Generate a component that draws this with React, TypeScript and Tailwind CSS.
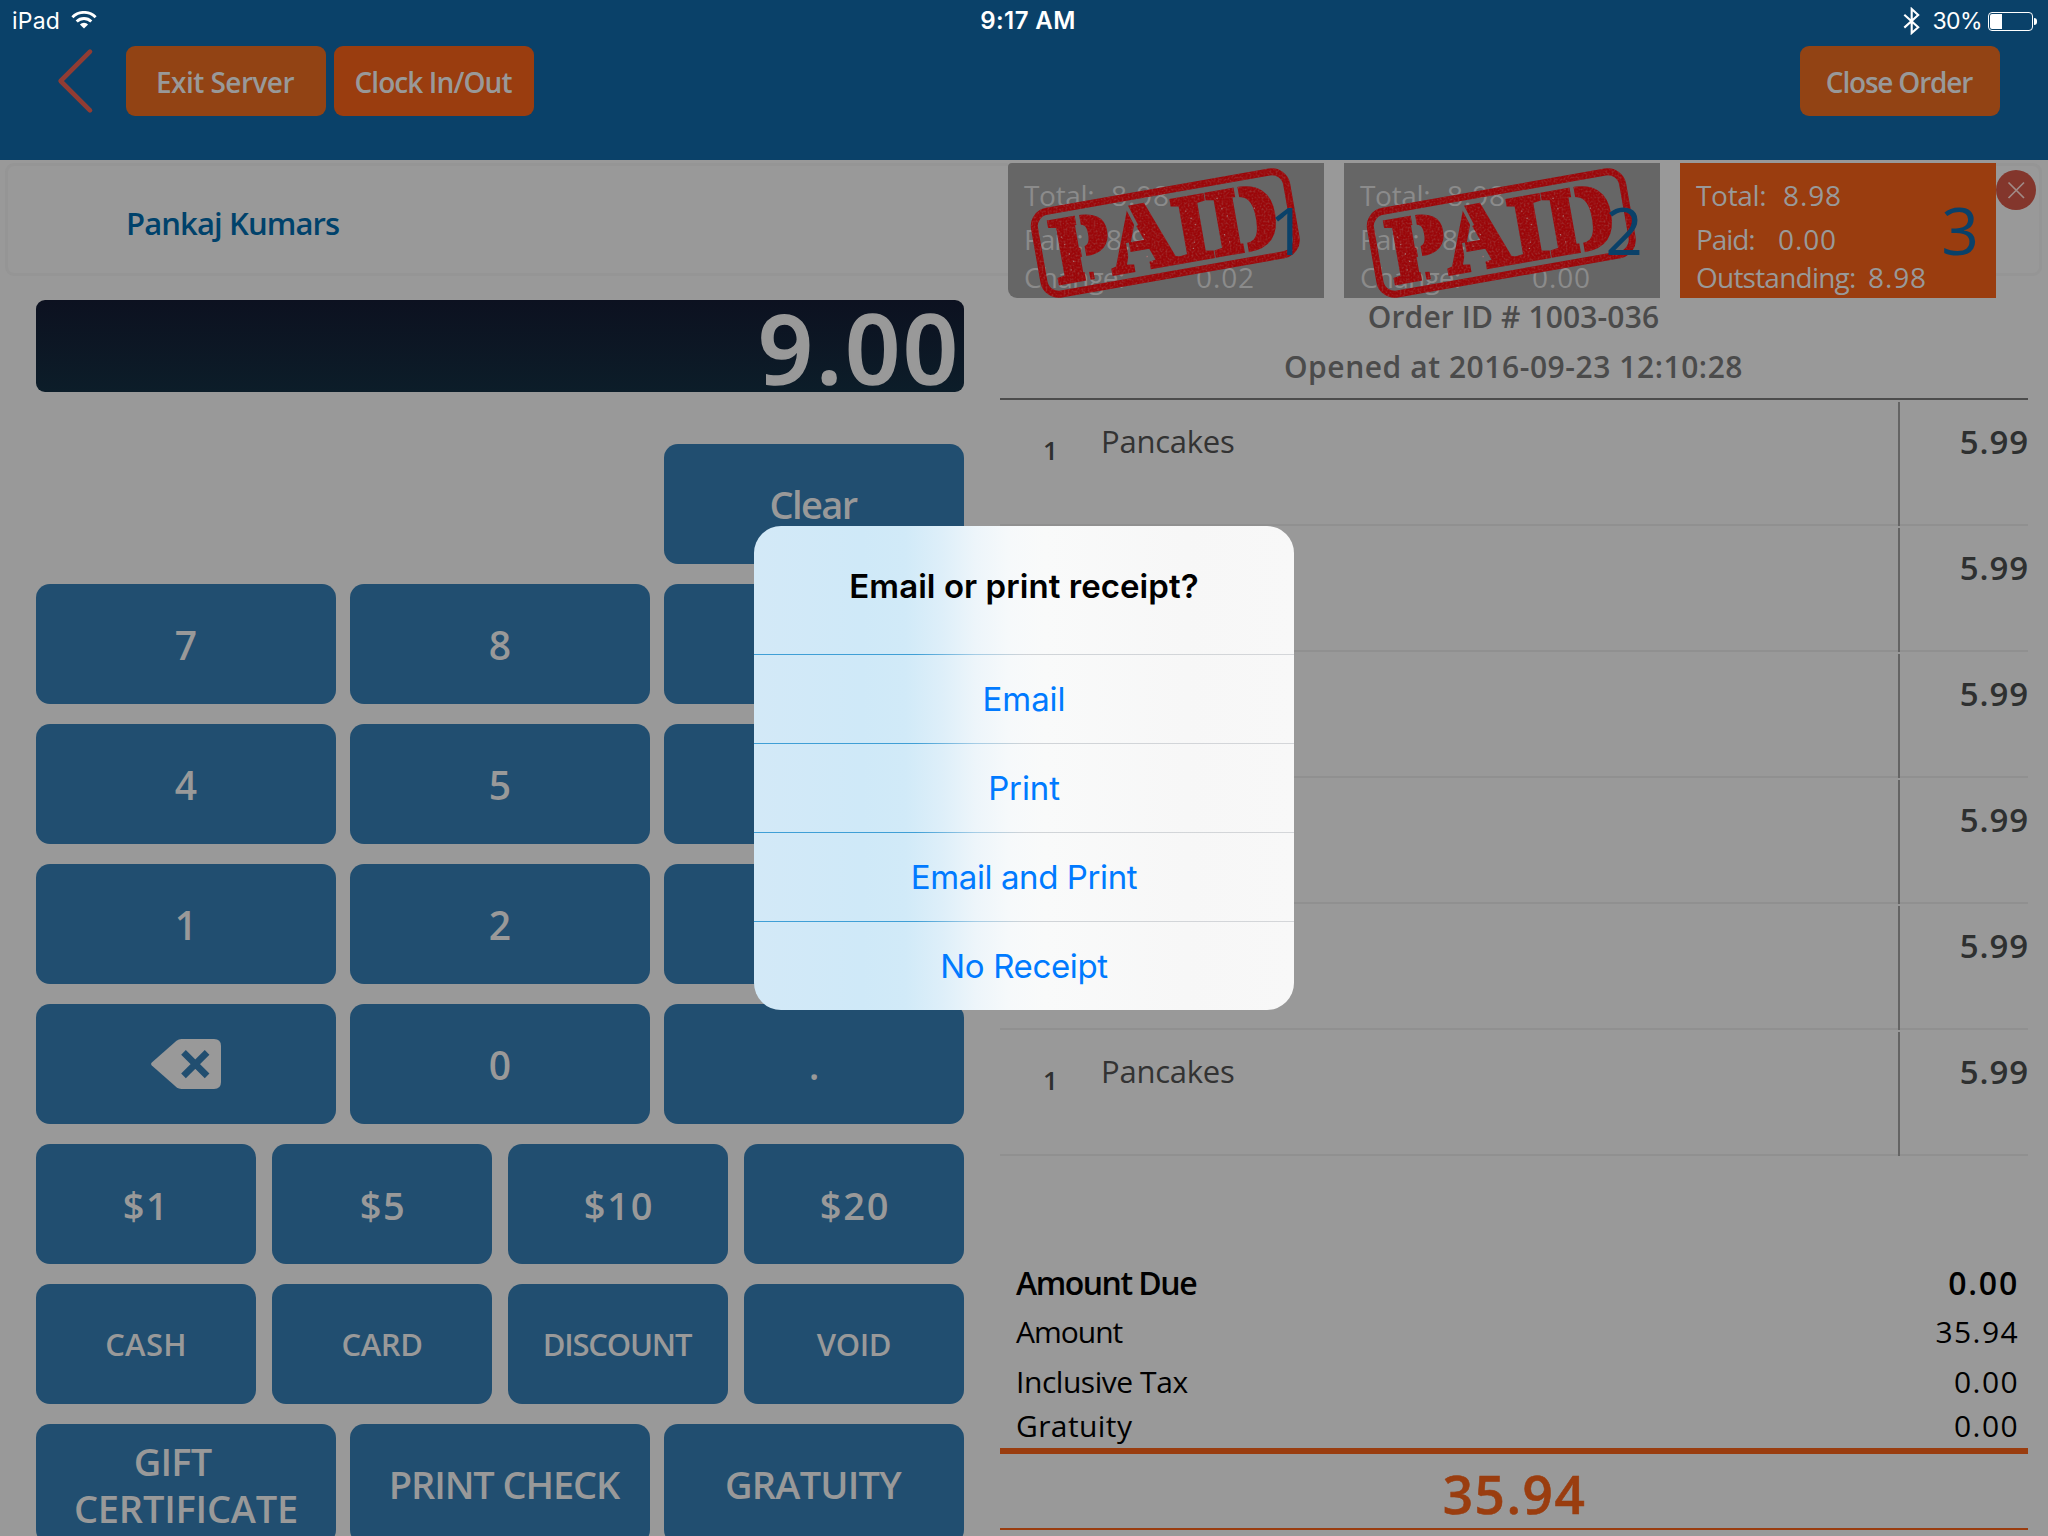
import React from "react";

type KeyProps = { children: React.ReactNode; className?: string };

function Key({ children, className = "" }: KeyProps) {
  return (
    <button
      className={`flex h-[120px] items-center justify-center rounded-[14px] bg-[#214e70] font-semibold text-[#999999] ${className}`}
    >
      {children}
    </button>
  );
}

function WifiIcon() {
  return (
    <svg width="26" height="20" viewBox="0 0 26 20" fill="none" stroke="#fff" strokeWidth="2.9">
      <path d="M1.4 6.2A16.4 16.4 0 0 1 24.6 6.2" />
      <path d="M5.7 10.5A10.3 10.3 0 0 1 20.3 10.5" />
      <path d="M13 17.6L8.9 13.5A5.8 5.8 0 0 1 17.1 13.5Z" fill="#fff" stroke="none" />
    </svg>
  );
}

function BluetoothIcon() {
  return (
    <svg width="17" height="28" viewBox="0 0 17 28" fill="none" stroke="#fff" strokeWidth="2.1">
      <path d="M1.3 7.7L15.2 20.3L8.7 26V2L15.2 8L1.3 20.6" />
    </svg>
  );
}

function Battery() {
  return (
    <div className="flex items-center gap-px">
      <div className="flex h-[19px] w-[45px] items-center rounded-[4px] border border-white p-px">
        <div className="h-[15px] w-[12px] rounded-l-[2px] bg-white" />
      </div>
      <div className="h-[7px] w-[3px] rounded-r-full bg-white" />
    </div>
  );
}

function StatusBar() {
  return (
    <div className="grid h-[42px] grid-cols-3 items-center pr-[11px] pl-[12px] font-['Inter',sans-serif] text-[23px] text-white">
      <div className="flex items-center gap-[11px]">
        <span className="tracking-[0.2px]">iPad</span>
        <WifiIcon />
      </div>
      <div className="pl-[7px] text-center text-[24px] font-semibold tracking-[0.4px]">9:17 AM</div>
      <div className="flex items-center justify-end">
        <BluetoothIcon />
        <span className="mr-[6px] ml-[12px] tracking-[-0.6px]">30%</span>
        <Battery />
      </div>
    </div>
  );
}

function Header() {
  return (
    <header className="h-[160px] bg-[#0a4169]">
      <StatusBar />
      <div className="mt-[4px] flex h-[70px] items-center pr-[48px] pl-[56px] text-[28px] font-semibold text-[#999999]">
        <svg className="mr-[30px]" width="40" height="70" viewBox="0 0 40 70" fill="none">
          <path d="M34 5.7L4.6 35L34 64.3" stroke="#913c33" strokeWidth="4.6" strokeLinecap="round" strokeLinejoin="round" />
        </svg>
        <button className="h-[70px] w-[200px] rounded-[9px] bg-[#924314] pt-[2px] pr-[2px] tracking-[-0.55px]">Exit Server</button>
        <button className="ml-2 h-[70px] w-[200px] rounded-[9px] bg-[#9a3d0f] pt-[2px] pr-[2px] tracking-[-0.9px]">Clock In/Out</button>
        <button className="ml-auto h-[70px] w-[200px] rounded-[9px] bg-[#924314] pt-[2px] pr-[2px] tracking-[-1.2px]">Close Order</button>
      </div>
    </header>
  );
}

function BackspaceIcon() {
  return (
    <svg width="70" height="50" viewBox="0 0 70 50">
      <path
        d="M0.8 23.4L25.5 1.8Q27.6 0 30.5 0H63Q70 0 70 7V43Q70 50 63 50H30.5Q27.6 50 25.5 48.2L0.8 26.6Q-0.6 25 0.8 23.4Z"
        fill="#999999"
      />
      <path d="M32.5 13.3L56.1 36.9M56.1 13.3L32.5 36.9" stroke="#214e70" strokeWidth="6.6" />
    </svg>
  );
}

function Keypad() {
  return (
    <section className="w-[1000px] pr-[36px] pl-[36px]">
      <div className="mb-[14px] flex h-[126px] items-center pl-[90px] pt-px text-[31px] font-semibold tracking-[-0.88px] text-[#00426b]">
        Pankaj Kumars
      </div>
      <div className="flex h-[92px] items-center justify-end rounded-[9px] bg-linear-to-b from-[#0c1120] to-[#0c1d29] pt-[2px] pr-[3px] text-[96px] leading-[90px] font-semibold tracking-[3px] text-[#999999] [-webkit-text-stroke:1.6px_#999999]">
        9.00
      </div>
      <div className="mt-[52px] grid grid-cols-3 gap-x-[14px] gap-y-[20px] text-[39px]">
        <Key className="col-start-3 pt-px pr-[2px] text-[38px] tracking-[-1.65px]">Clear</Key>
        <Key className="pt-[2px]">7</Key>
        <Key className="pt-[2px]">8</Key>
        <Key>{null}</Key>
        <Key className="pt-[2px]">4</Key>
        <Key className="pt-[2px]">5</Key>
        <Key>{null}</Key>
        <Key className="pt-[2px]">1</Key>
        <Key className="pt-[2px]">2</Key>
        <Key>{null}</Key>
        <Key><BackspaceIcon /></Key>
        <Key className="pt-[2px]">0</Key>
        <Key className="pt-[2px]">.</Key>
      </div>
      <div className="mt-[20px] grid grid-cols-4 gap-x-[16px] gap-y-[20px]">
        <Key className="pt-[2px] text-[38px] tracking-[1.6px]">$1</Key>
        <Key className="pt-[2px] pl-[2px] text-[38px] tracking-[1.6px]">$5</Key>
        <Key className="pt-[2px] pl-[2px] text-[38px] tracking-[1.8px]">$10</Key>
        <Key className="pt-[2px] pl-[2px] text-[38px] tracking-[1.8px]">$20</Key>
        <Key className="text-[31px] tracking-[0.3px]">CASH</Key>
        <Key className="text-[31px] tracking-[-0.4px]">CARD</Key>
        <Key className="pr-[2px] text-[31px] tracking-[-1.2px]">DISCOUNT</Key>
        <Key className="text-[31px] tracking-[-0.4px]">VOID</Key>
      </div>
      <div className="mt-[20px] grid grid-cols-3 gap-x-[14px] text-[38px] leading-[47px]">
        <Key className="flex-col pt-[2px] tracking-[-0.2px]">
          <span className="pr-[27px] tracking-[-0.8px]">GIFT</span>
          <span>CERTIFICATE</span>
        </Key>
        <Key className="pt-px pl-[8px] tracking-[-1.1px]">PRINT CHECK</Key>
        <Key className="pt-px pr-[2px] tracking-[-0.8px]">GRATUITY</Key>
      </div>
    </section>
  );
}

const specks = [
  [-103, -14], [-101, -6], [-98, 4], [-95, 12], [-99, 20], [-30, 8], [-22, 20], [-18, 26], [-26, -6], [-21, -2],
  [24, -18], [28, -10], [31, -3], [27, 14], [25, 20], [57, -25], [60, -14], [64, -6], [58, 12], [62, 20], [92, -9],
];

function PaidStamp() {
  return (
    <svg className="absolute inset-0 z-10 overflow-visible" width="316" height="135" viewBox="0 0 316 135">
      <defs>
        <filter id="grain" x="0" y="0" width="316" height="135" filterUnits="userSpaceOnUse" colorInterpolationFilters="sRGB">
          <feTurbulence type="fractalNoise" baseFrequency="0.5" numOctaves="2" seed="4" result="noise" />
          <feColorMatrix in="noise" type="matrix" values="0 0 0 0 0.62 0 0 0 0 0.22 0 0 0 0 0.22 0 0 0 2 -0.85" result="light" />
          <feComposite in="light" in2="SourceGraphic" operator="in" result="flecks" />
          <feMerge>
            <feMergeNode in="SourceGraphic" />
            <feMergeNode in="flecks" />
          </feMerge>
        </filter>
        <mask id="stencil" maskUnits="userSpaceOnUse" x="-160" y="-70" width="320" height="140">
          <rect x="-160" y="-70" width="320" height="140" fill="#fff" />
          <g stroke="#000" fill="none">
            <path d="M-84 -40V40" strokeWidth="4.5" />
            <path d="M77 -40V40" strokeWidth="4" />
            <path d="M-34 -34L-27 -12" strokeWidth="3.5" />
            <path d="M-39 3V18" strokeWidth="3" />
          </g>
        </mask>
      </defs>
      <g filter="url(#grain)">
        <g transform="translate(157.3 70) rotate(-10)">
          <rect x="-128" y="-42" width="256" height="84" rx="15" fill="none" stroke="#9b0609" strokeWidth="7" />
          <g mask="url(#stencil)">
            <text
              x="-114 -58 9 46"
              y="31"
              fontFamily="Liberation Serif, serif"
              fontWeight="700"
              fontSize="94"
              fill="#9b0609"
              stroke="#9b0609"
              strokeWidth="4.5"
            >
              PAID
            </text>
          </g>
          {specks.map(([x, y]) => (
            <circle key={`${x},${y}`} cx={x} cy={y} r="0.7" fill="#a88" />
          ))}
        </g>
      </g>
    </svg>
  );
}

type Check = {
  id: number;
  total: string;
  paid: string;
  label: string;
  rest: string;
  settled: boolean;
  className: string;
};

const checks: Check[] = [
  { id: 1, total: "8.98", paid: "8.98", label: "Change:", rest: "0.02", settled: true, className: "bg-[#666666] text-[#8b8b8b] rounded-tl-[4px] rounded-bl-[9px]" },
  { id: 2, total: "8.98", paid: "8.98", label: "Change:", rest: "0.00", settled: true, className: "bg-[#666666] text-[#8b8b8b]" },
  { id: 3, total: "8.98", paid: "0.00", label: "Outstanding:", rest: "8.98", settled: false, className: "bg-[#9a3d0f] text-[#999999]" },
];

function CheckCard({ check }: { check: Check }) {
  return (
    <div className={`relative h-[135px] w-[316px] pt-[10px] pl-[16px] text-[28px] ${check.className}`}>
      <div className="flex h-[44px] items-center">
        <span className="w-[87px] tracking-[-0.3px]">Total:</span>
        <span className="tracking-[0.9px]">{check.total}</span>
      </div>
      <div className="flex h-[44px] items-center">
        <span className="w-[82px] tracking-[-1.1px]">Paid:</span>
        <span className="tracking-[0.9px]">{check.paid}</span>
      </div>
      <div className="flex h-[32px] items-center">
        <span className="w-[172px] tracking-[-0.78px]">{check.label}</span>
        <span className="tracking-[0.9px]">{check.rest}</span>
      </div>
      {check.settled && <PaidStamp />}
      <div className="absolute top-[26px] right-[17px] z-20 text-[66px] leading-[80px] text-[#0a4169]">{check.id}</div>
    </div>
  );
}

const items = [
  { key: "a", qty: "1", name: "Pancakes", price: "5.99" },
  { key: "b", qty: "", name: "", price: "5.99" },
  { key: "c", qty: "", name: "", price: "5.99" },
  { key: "d", qty: "", name: "", price: "5.99" },
  { key: "e", qty: "", name: "", price: "5.99" },
  { key: "f", qty: "1", name: "Pancakes", price: "5.99" },
];

function OrderPanel() {
  return (
    <section className="w-[1028px]">
      <div className="relative ml-[8px] flex h-[138px] w-[988px] gap-[20px] bg-[#999999] pt-[3px]">
        {checks.map((c) => (
          <CheckCard key={c.id} check={c} />
        ))}
        <svg className="absolute top-[10px] left-[988px]" width="41" height="41" viewBox="0 0 41 41">
          <circle cx="20" cy="20" r="20" fill="#83362c" />
          <path d="M12.5 12.5L28 28M28 12.5L12.5 28" stroke="#a08a86" strokeWidth="1.7" />
        </svg>
      </div>
      <div className="flex h-[36px] items-center justify-center pr-px text-[30px] font-semibold tracking-[0.12px] text-[#4b4b4b]">
        Order ID # 1003-036
      </div>
      <div className="flex h-[64px] items-center justify-center pr-px text-[30px] font-semibold tracking-[0.55px] text-[#4b4b4b]">
        Opened at 2016-09-23 12:10:28
      </div>
      <div className="h-[2px] bg-[#4c4c4c]" />
      {items.map((item) => (
        <div key={item.key} className="flex h-[126px] pt-[2px] text-[#2e3030]">
          <div className="flex w-[898px] items-start border-b-2 border-[#909090]">
            <span className="w-[101px] pt-[30px] pl-[43px] text-[26px] leading-[36px] font-semibold">{item.qty}</span>
            <span className="pt-[19px] text-[31px] leading-[40px] tracking-[-0.24px] text-[#333333]">{item.name}</span>
          </div>
          <div className="w-[2px] bg-[#646464]" />
          <div className="w-[128px] border-b-2 border-[#909090] pt-[20px] text-right text-[33px] leading-[40px] font-semibold">
            <span className="-mr-px tracking-[0.9px]">{item.price}</span>
          </div>
        </div>
      ))}
      <div className="h-[292px] pt-[102px] pr-[9px] pl-[16px] text-[30px] text-black">
        <div className="flex h-[49px] items-center justify-between pt-px text-[32px] font-semibold">
          <span className="tracking-[-1.5px]">Amount Due</span>
          <span className="tracking-[1.8px]">0.00</span>
        </div>
        <div className="flex h-[49px] items-center justify-between">
          <span className="tracking-[-1px]">Amount</span>
          <span className="tracking-[1.4px]">35.94</span>
        </div>
        <div className="flex h-[50px] items-center justify-between">
          <span className="tracking-[-0.45px]">Inclusive Tax</span>
          <span className="tracking-[1.4px]">0.00</span>
        </div>
        <div className="flex h-[39px] items-center justify-between">
          <span className="tracking-[0.4px]">Gratuity</span>
          <span className="tracking-[1.4px]">0.00</span>
        </div>
      </div>
      <div className="h-[6px] bg-[#9a3d0f]" />
      <div className="flex h-[74px] items-center justify-center pt-[6px] pl-px text-[53px] leading-[68px] font-semibold tracking-[1.6px] text-[#9a3d0f] [-webkit-text-stroke:0.6px_#9a3d0f]">
        35.94
      </div>
      <div className="h-[2px] bg-[#9a3d0f]" />
    </section>
  );
}

const actions = [
  { label: "Email", tracking: "tracking-[-0.07px]" },
  { label: "Print", tracking: "tracking-[-0.13px]" },
  { label: "Email and Print", tracking: "tracking-[-0.4px]" },
  { label: "No Receipt", tracking: "tracking-[-0.36px]" },
];

function ReceiptDialog() {
  return (
    <div className="absolute inset-0 z-30 flex items-center justify-center">
      <div className="h-[484px] w-[540px] overflow-hidden rounded-[27px] bg-[linear-gradient(90deg,#d3e9f7_0%,#cfe9f8_20%,#d1eaf8_28%,#deeff9_35%,#edf5fa_41%,#f6f9fb_47%,#f9fafa_54%,#f7f7f7_80%,#f8f8f8_100%)] font-['Inter',sans-serif] text-[33px]">
        <div className="flex h-[128px] justify-center pt-[40px] leading-[40px] font-semibold tracking-[0.06px] text-black">
          Email or print receipt?
        </div>
        {actions.map((a) => (
          <div key={a.label}>
            <div className="h-px bg-[linear-gradient(90deg,#3f9fd6_0%,#3f9fd6_30%,#a5cde6_41%,#d0d4d8_50%,#d4d6d9_100%)]" />
            <button className={`flex h-[88px] w-full items-center justify-center pt-[2px] text-[#007aff] ${a.tracking}`}>{a.label}</button>
          </div>
        ))}
      </div>
    </div>
  );
}

export default function App() {
  return (
    <div className="relative h-[1536px] w-[2048px] overflow-hidden bg-[#999999] font-['Open_Sans','Noto_Sans',sans-serif]">
      <Header />
      <main className="relative flex">
        <div className="absolute top-[3px] left-[5px] h-[113px] w-[2037px] rounded-[9px] border-[3px] border-[#959595]" />
        <div className="relative flex">
          <Keypad />
          <OrderPanel />
        </div>
      </main>
      <ReceiptDialog />
    </div>
  );
}
